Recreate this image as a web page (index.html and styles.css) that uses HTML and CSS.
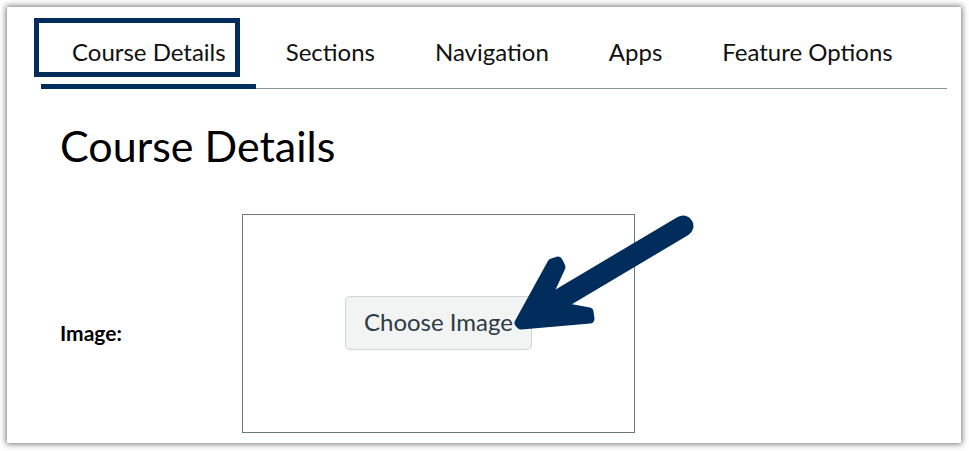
FILE: index.html
```html
<!DOCTYPE html>
<html lang="en">
<head>
<meta charset="utf-8">
<title>Course Details</title>
<link rel="stylesheet" href="styles.css">
</head>
<body>
<div class="panel">
  <nav class="tabs">
    <div class="tab active"><span class="focus-ring"></span>Course Details</div>
    <div class="tab">Sections</div>
    <div class="tab">Navigation</div>
    <div class="tab">Apps</div>
    <div class="tab">Feature Options</div>
  </nav>
  <div class="content">
    <h1 class="title">Course Details</h1>
    <div class="form-row">
      <div class="label">Image:</div>
      <div class="image-box">
        <button class="choose-btn" type="button">Choose Image</button>
      </div>
    </div>
  </div>
</div>
<svg class="arrow" width="969" height="451" viewBox="0 0 969 451" aria-hidden="true">
  <line x1="683" y1="226" x2="545" y2="308" stroke="#012d5c" stroke-width="21" stroke-linecap="round"/>
  <polygon points="519,323 552,263 558,261 561,267 549,293 562,307 589,312 590,319 521,325" fill="#012d5c" stroke="#012d5c" stroke-width="9" stroke-linejoin="round"/>
</svg>
</body>
</html>
```
FILE: styles.css
```css
html, body {
  margin: 0;
  padding: 0;
  background: #ffffff;
}
body {
  width: 969px;
  height: 451px;
  overflow: hidden;
  position: relative;
  font-family: Lato, "Open Sans", "Liberation Sans", sans-serif;
}
.panel {
  margin: 7px 8px 0 7px;
  height: 436px;
  background: #ffffff;
  box-shadow: 0 0 6px 1px rgba(0, 0, 0, 0.55);
  padding-top: 11px;
  box-sizing: border-box;
}
.tabs {
  display: flex;
  margin: 0 14px 0 34px;
  border-bottom: 1px solid #8d959c;
  height: 70px;
}
.tab {
  position: relative;
  display: flex;
  align-items: center;
  height: 71px;
  box-sizing: border-box;
  padding: 0 30px;
  border-bottom: 5px solid transparent;
  margin-bottom: -1px;
  font-size: 24px;
  color: #111;
  white-space: nowrap;
}
.tab.active {
  padding: 0 30px 0 31px;
  border-bottom-color: #012d5c;
}
.focus-ring {
  position: absolute;
  left: -7px;
  top: 0;
  width: 206px;
  height: 59px;
  box-sizing: border-box;
  border: 5px solid #012d5c;
}
.content {
  padding-left: 53px;
}
.title {
  margin: 31px 0 0 0;
  font-size: 43px;
  font-weight: 400;
  line-height: 1.2;
  color: #000;
}
.form-row {
  display: flex;
  align-items: flex-start;
  margin-top: 42px;
}
.label {
  width: 182px;
  margin-top: 106px;
  font-size: 21px;
  font-weight: 700;
  line-height: 1.2;
  color: #000;
}
.image-box {
  width: 393px;
  height: 219px;
  box-sizing: border-box;
  border: 1px solid #6b7780;
  display: flex;
  align-items: center;
  justify-content: center;
}
.choose-btn {
  width: 187px;
  height: 54px;
  padding: 0 0 4px 0;
  background: #f2f3f3;
  border: 1px solid #cfd4d7;
  border-radius: 5px;
  font-family: Lato, "Open Sans", "Liberation Sans", sans-serif;
  font-size: 24px;
  color: #2d3b45;
}
.arrow {
  position: absolute;
  left: 0;
  top: 0;
  pointer-events: none;
}
```
